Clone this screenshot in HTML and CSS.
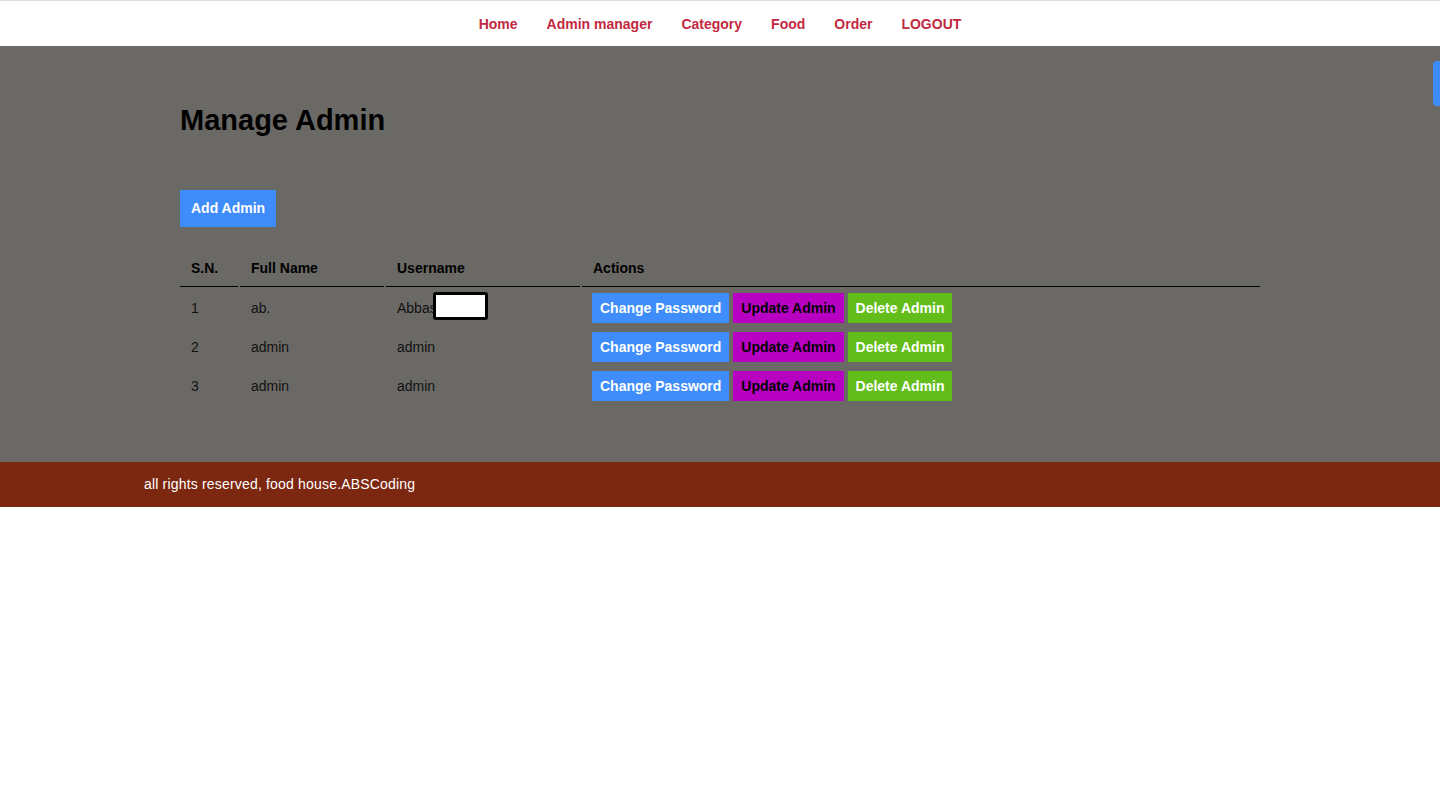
FILE: index.html
```html
<!DOCTYPE html>
<html lang="en">
<head>
<meta charset="utf-8">
<title>Manage Admin</title>
<link rel="stylesheet" href="styles.css">
</head>
<body>
<nav class="menu">
  <a href="#">Home</a>
  <a href="#">Admin manager</a>
  <a href="#">Category</a>
  <a href="#">Food</a>
  <a href="#">Order</a>
  <a href="#">LOGOUT</a>
</nav>
<main class="main">
  <div class="wrapper">
    <h1 class="title">Manage Admin</h1>
    <a href="#" class="btn btn-primary btn-add">Add Admin</a>
    <table class="tbl">
      <thead>
        <tr>
          <th class="c-sn">S.N.</th>
          <th class="c-name">Full Name</th>
          <th class="c-user">Username</th>
          <th>Actions</th>
        </tr>
      </thead>
      <tbody>
        <tr>
          <td>1</td>
          <td>ab.</td>
          <td class="redact-cell">Abbas<span class="redact"></span></td>
          <td class="actions"><a href="#" class="btn btn-primary">Change Password</a> <a href="#" class="btn btn-secondary">Update Admin</a> <a href="#" class="btn btn-danger">Delete Admin</a></td>
        </tr>
        <tr>
          <td>2</td>
          <td>admin</td>
          <td>admin</td>
          <td class="actions"><a href="#" class="btn btn-primary">Change Password</a> <a href="#" class="btn btn-secondary">Update Admin</a> <a href="#" class="btn btn-danger">Delete Admin</a></td>
        </tr>
        <tr>
          <td>3</td>
          <td>admin</td>
          <td>admin</td>
          <td class="actions"><a href="#" class="btn btn-primary">Change Password</a> <a href="#" class="btn btn-secondary">Update Admin</a> <a href="#" class="btn btn-danger">Delete Admin</a></td>
        </tr>
      </tbody>
    </table>
  </div>
</main>
<footer class="footer">all rights reserved, food house.ABSCoding</footer>
<div class="side-tab"></div>
</body>
</html>
```

FILE: styles.css
```css
* { box-sizing: border-box; }

html, body {
  margin: 0;
  padding: 0;
  background: #ffffff;
  font-family: "Liberation Sans", Arial, sans-serif;
  font-size: 14px;
  color: #000;
}

.menu {
  border-top: 1px solid #dddddd;
  background: #ffffff;
  padding: 15px 0 14px;
  line-height: 16px;
  display: flex;
  justify-content: center;
  gap: 29px;
}

.menu a {
  color: #c2283f;
  font-weight: bold;
  text-decoration: none;
}

.main {
  background: #6b6966;
  padding: 57px 0 56px;
}

.wrapper {
  width: 1080px;
  margin: 0 auto;
}

.title {
  margin: 0;
  font-size: 29px;
  line-height: 34px;
  font-weight: bold;
  color: #000;
}

.btn {
  display: inline-block;
  font-weight: bold;
  font-size: 14px;
  line-height: 16px;
  text-decoration: none;
  padding: 7px 8px;
  color: #ffffff;
}

.btn-add {
  margin-top: 53px;
  padding: 10px 11px 11px;
}

.btn-primary { background: #3e8dfb; color: #ffffff; }
.btn-secondary { background: #b800c2; color: #000000; }
.btn-danger { background: #62bd1a; color: #ffffff; }

.tbl {
  width: calc(100% + 4px);
  margin: 21px -2px 0;
  border-spacing: 2px;
  border-collapse: separate;
}

.tbl th {
  text-align: left;
  font-weight: bold;
  padding: 10px 11px;
  line-height: 16px;
  border-bottom: 1px solid #000;
}

.c-sn { width: 58px; }
.c-name { width: 144px; }
.c-user { width: 194px; }

.tbl td {
  padding: 4px 10px 3px 11px;
  line-height: 16px;
  color: #111;
  vertical-align: middle;
}

.tbl td.actions { padding-left: 10px; }

.redact-cell { position: relative; }

.redact {
  position: absolute;
  left: 47px;
  top: 3px;
  width: 55px;
  height: 28px;
  background: #ffffff;
  border: 3px solid #000;
  border-radius: 3px;
}

.footer {
  background: #7c2710;
  color: #ffffff;
  padding: 14px 10% 14px;
  line-height: 17px;
  font-size: 14px;
  letter-spacing: 0.18px;
}

.side-tab {
  position: fixed;
  right: 0;
  top: 61px;
  width: 7px;
  height: 45px;
  background: #3e8dfb;
  border-radius: 4px 0 0 4px;
}
```
